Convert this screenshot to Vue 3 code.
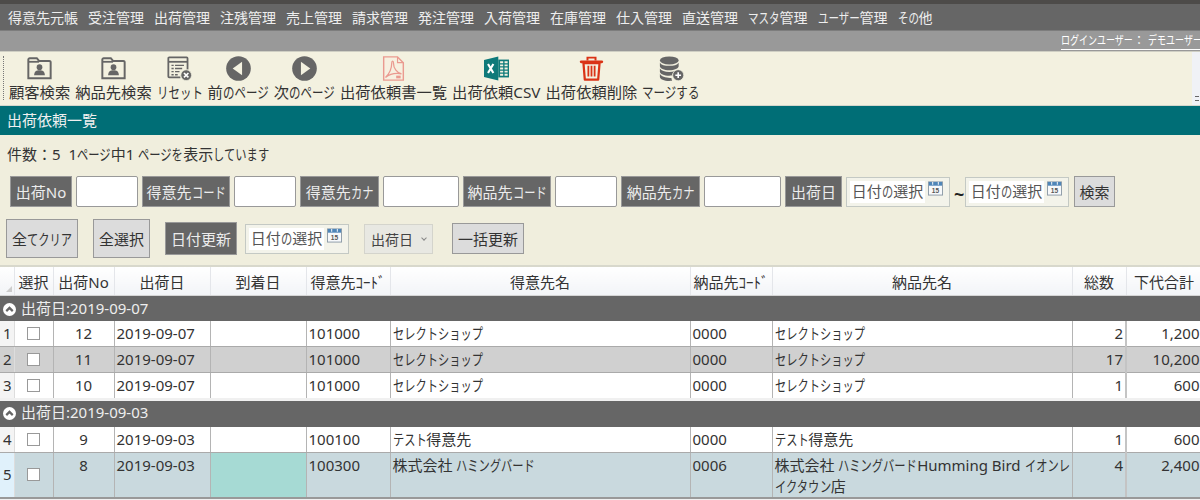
<script setup>
import { h } from 'vue'

// kana in the original font are condensed, so they are squeezed run by run
const KANA_SCALE = 0.75

function Jp(props) {
  const parts = props.text.match(/[ぁ-ゖァ-ヺー]{1,4}|[^ぁ-ゖァ-ヺー]+/g) || []
  return parts.map((part) =>
    /^[ぁ-ゖァ-ヺー]/.test(part)
      ? h('span', { class: 'kana', style: { width: part.length * KANA_SCALE + 'em' } }, part)
      : part
  )
}
Jp.props = ['text']

const menus = ['得意先元帳', '受注管理', '出荷管理', '注残管理', '売上管理', '請求管理', '発注管理', '入荷管理', '在庫管理', '仕入管理', '直送管理', 'マスタ管理', 'ユーザー管理', 'その他']

const tools = [
  { label: '顧客検索', icon: 'folder' },
  { label: '納品先検索', icon: 'folder' },
  { label: 'リセット', icon: 'reset' },
  { label: '前のページ', icon: 'prev' },
  { label: '次のページ', icon: 'next' },
  { label: '出荷依頼書一覧', icon: 'pdf' },
  { label: '出荷依頼CSV', icon: 'excel' },
  { label: '出荷依頼削除', icon: 'trash' },
  { label: 'マージする', icon: 'db' },
]

const filters = [
  { label: '出荷No', labelWidth: 62, inputWidth: 62 },
  { label: '得意先コード', labelWidth: 88, inputWidth: 62 },
  { label: '得意先カナ', labelWidth: 79, inputWidth: 76 },
  { label: '納品先コード', labelWidth: 88, inputWidth: 62 },
  { label: '納品先カナ', labelWidth: 79, inputWidth: 77 },
]

const headers = [
  { label: '選択', width: 39 },
  { label: '出荷No', width: 61 },
  { label: '出荷日', width: 96 },
  { label: '到着日', width: 96 },
  { label: '得意先ｺｰﾄﾞ', width: 84 },
  { label: '得意先名', width: 300 },
  { label: '納品先ｺｰﾄﾞ', width: 82 },
  { label: '納品先名', width: 300 },
  { label: '総数', width: 54 },
  { label: '下代合計', width: 76 },
]

const groups = [
  {
    title: '出荷日:2019-09-07',
    rows: [
      { n: 1, no: 12, date: '2019-09-07', code: '101000', name: 'セレクトショップ', dcode: '0000', dname: 'セレクトショップ', qty: 2, total: '1,200' },
      { n: 2, no: 11, date: '2019-09-07', code: '101000', name: 'セレクトショップ', dcode: '0000', dname: 'セレクトショップ', qty: 17, total: '10,200', kind: 'gray' },
      { n: 3, no: 10, date: '2019-09-07', code: '101000', name: 'セレクトショップ', dcode: '0000', dname: 'セレクトショップ', qty: 1, total: '600' },
    ],
  },
  {
    title: '出荷日:2019-09-03',
    rows: [
      { n: 4, no: 9, date: '2019-09-03', code: '100100', name: 'テスト得意先', dcode: '0000', dname: 'テスト得意先', qty: 1, total: '600' },
      { n: 5, no: 8, date: '2019-09-03', code: '100300', name: '株式会社 ハミングバード', dcode: '0006', dname: '株式会社 ハミングバードHumming Bird イオンレイクタウン店', qty: 4, total: '2,400', kind: 'blue' },
    ],
  },
]
</script>

<template>
  <div class="page">
    <nav class="menu">
      <span v-for="m in menus" :key="m" class="menu__item"><Jp :text="m" /></span>
    </nav>
    <div class="userbar">
      <a class="userbar__link"><Jp text="ログインユーザー： デモユーザー" /></a>
    </div>

    <div class="toolbar">
      <div class="toolbar__grip"></div>
      <div v-for="t in tools" :key="t.label" class="tool">
        <svg class="tool__icon" viewBox="0 0 28 28">
          <g v-if="t.icon === 'folder'">
            <path d="M1.500 25V4a1.500 1.500 0 0 1 1.500-1.500h8l2.500 3H25a1.500 1.500 0 0 1 1.500 1.500v18z" fill="none" stroke="#666" stroke-width="2.200" />
            <path d="M1.500 6.500h12" stroke="#666" stroke-width="2" />
            <circle cx="14" cy="12.500" r="3.200" fill="#666" />
            <path d="M8 21.500c0-4 2.500-5.500 6-5.500s6 1.500 6 5.500z" fill="#666" />
          </g>
          <g v-else-if="t.icon === 'reset'">
            <path d="M15 24H2.500a1 1 0 0 1-1-1V2.500a1 1 0 0 1 1-1H22a1 1 0 0 1 1 1V15" fill="none" stroke="#666" stroke-width="2" />
            <path d="M1.500 6.500H23" stroke="#666" stroke-width="2" />
            <path d="M5 10.500h2.500M9 10.500h10M5 14h2.500M9 14h8M5 17.500h2.500M9 17.500h5M5 21h2.500M9 21h3" stroke="#666" stroke-width="1.500" />
            <circle cx="21.500" cy="21.500" r="6" fill="#666" stroke="#f3f1e0" stroke-width="0.800" />
            <path d="M19 19l5 5M24 19l-5 5" stroke="#fff" stroke-width="1.800" />
          </g>
          <g v-else-if="t.icon === 'prev'">
            <circle cx="14" cy="14" r="13.800" fill="#666" />
            <path d="M18 6.500v15L7.500 14z" fill="#f3f1e0" />
          </g>
          <g v-else-if="t.icon === 'next'">
            <circle cx="14" cy="14" r="13.800" fill="#666" />
            <path d="M10 6.500v15L20.500 14z" fill="#f3f1e0" />
          </g>
          <g v-else-if="t.icon === 'pdf'">
            <path d="M3 1h15.500L25 7.500V27H3z" fill="#f7f0e0" stroke="#ea9a90" stroke-width="1.600" />
            <path d="M18.500 1v6.500H25" fill="none" stroke="#ea9a90" stroke-width="1.300" />
            <path d="M5 24c4-4 7-9 7-16 0-3 2-3 2 0 0 6 4 11 9 12-6-1-13 0-18 4z" fill="none" stroke="#ea9a90" stroke-width="1.400" />
            <rect x="17" y="22" width="5" height="3" fill="#ea9a90" />
          </g>
          <g v-else-if="t.icon === 'excel'">
            <path d="M0 4.500L16 .5v27L0 23.500z" fill="#0f7a7a" />
            <path d="M4.500 9l6 10M10.500 9l-6 10" stroke="#fff" stroke-width="2.400" />
            <path d="M16 4h12v20H16z" fill="#0f7a7a" />
            <path d="M18 7h3.500M23 7h3.500M18 10.500h3.500M23 10.500h3.500M18 14h3.500M23 14h3.500M18 17.500h3.500M23 17.500h3.500M18 21h3.500M23 21h3.500" stroke="#f3f1e0" stroke-width="2" />
          </g>
          <g v-else-if="t.icon === 'trash'">
            <path d="M5 8h18l-1.500 18.500h-15z" fill="none" stroke="#da3316" stroke-width="2.500" stroke-linejoin="round" />
            <path d="M2.500 6.500h23" stroke="#da3316" stroke-width="3.200" stroke-linecap="round" />
            <path d="M9.500 5V1.800h9V5" fill="none" stroke="#da3316" stroke-width="2.200" />
            <path d="M10.500 11v12M14 11v12M17.500 11v12" stroke="#da3316" stroke-width="2" />
          </g>
          <g v-else>
            <ellipse cx="11.500" cy="5" rx="10.500" ry="4.500" fill="#666" />
            <path d="M1 7.500v4c0 2.500 4.700 4.500 10.500 4.500S22 14 22 11.500v-4C20.500 10 16.500 11 11.500 11S2.500 10 1 7.500z" fill="#666" />
            <path d="M1 14v3.500C1 20 5.700 22 11.500 22c1 0 2-.1 2.800-.2.600-2 1.700-3.600 3.500-4.800-2 .5-4 .8-6.300.8C6.500 17.800 2.500 16.500 1 14z" fill="#666" />
            <path d="M1 20v3.500C1 26 5.700 28 11.500 28c1.200 0 2.300-.1 3.300-.2-.5-1-.8-2.200-.9-3.300-5.400.3-11.400-1-12.900-4.500z" fill="#666" />
            <circle cx="21.500" cy="21.500" r="6.200" fill="#666" stroke="#f3f1e0" stroke-width="0.800" />
            <path d="M18.300 21.500h6.400M21.500 18.300v6.400" stroke="#fff" stroke-width="1.800" />
          </g>
        </svg>
        <span class="tool__label"><Jp :text="t.label" /></span>
      </div>
      <div class="toolbar__end"><span class="toolbar__more"></span></div>
    </div>

    <h1 class="title">出荷依頼一覧</h1>

    <section class="panel">
      <p class="panel__count"><Jp text="件数：5  1ページ中1 ページを表示しています" /></p>

      <div class="filters">
        <template v-for="f in filters" :key="f.label">
          <span class="tag" :style="{ width: f.labelWidth + 'px' }"><span><Jp :text="f.label" /></span></span>
          <span class="field" :style="{ width: f.inputWidth + 'px' }"></span>
        </template>
        <span class="tag tag--date">出荷日</span>
        <span class="date">
          <span class="date__text"><Jp text="日付の選択" /></span>
          <svg class="cal" viewBox="0 0 16 16">
            <rect x="0.500" y="1" width="15" height="14" fill="#f7f9fb" stroke="#8c9aa6" />
            <rect x="1" y="1" width="14" height="4" fill="#4f86b8" />
            <path d="M5 1v3M11 1v3" stroke="#fff" />
            <text x="8" y="13" text-anchor="middle" class="cal__num">15</text>
          </svg>
        </span>
        <span class="tilde">~</span>
        <span class="date">
          <span class="date__text"><Jp text="日付の選択" /></span>
          <svg class="cal" viewBox="0 0 16 16">
            <rect x="0.500" y="1" width="15" height="14" fill="#f7f9fb" stroke="#8c9aa6" />
            <rect x="1" y="1" width="14" height="4" fill="#4f86b8" />
            <path d="M5 1v3M11 1v3" stroke="#fff" />
            <text x="8" y="13" text-anchor="middle" class="cal__num">15</text>
          </svg>
        </span>
        <button class="btn btn--search">検索</button>
      </div>

      <div class="actions">
        <button class="btn btn--tall btn--clear"><Jp text="全てクリア" /></button>
        <button class="btn btn--tall btn--all">全選択</button>
        <span class="tag tag--update">日付更新</span>
        <span class="date date--update">
          <span class="date__text"><Jp text="日付の選択" /></span>
          <svg class="cal" viewBox="0 0 16 16">
            <rect x="0.500" y="1" width="15" height="14" fill="#f7f9fb" stroke="#8c9aa6" />
            <rect x="1" y="1" width="14" height="4" fill="#4f86b8" />
            <path d="M5 1v3M11 1v3" stroke="#fff" />
            <text x="8" y="13" text-anchor="middle" class="cal__num">15</text>
          </svg>
        </span>
        <span class="select">出荷日<i class="select__arrow"></i></span>
        <button class="btn btn--bulk">一括更新</button>
      </div>
    </section>

    <div class="grid-wrap">
      <table class="grid">
        <colgroup>
          <col class="grid__rowcol" />
          <col v-for="h in headers" :key="h.label" :style="{ width: h.width + 'px' }" />
        </colgroup>
        <thead>
          <tr>
            <th class="grid__corner"><i></i></th>
            <th v-for="h in headers" :key="h.label">{{ h.label }}</th>
          </tr>
        </thead>
        <tbody v-for="(g, i) in groups" :key="g.title" :class="{ 'grid__later': i > 0 }">
          <tr class="grid__group">
            <td colspan="11">
              <span class="toggle">
                <svg viewBox="0 0 12 12"><path d="M3 7.500L6 4.500l3 3" fill="none" stroke="#666" stroke-width="2" /></svg>
              </span>{{ g.title }}
            </td>
          </tr>
          <tr v-for="r in g.rows" :key="r.n" :class="r.kind ? 'row--' + r.kind : ''">
            <td class="cell--n">{{ r.n }}</td>
            <td class="cell--c cell--check"><span class="check"></span></td>
            <td class="cell--c">{{ r.no }}</td>
            <td>{{ r.date }}</td>
            <td class="cell--arrive"></td>
            <td>{{ r.code }}</td>
            <td><Jp :text="r.name" /></td>
            <td>{{ r.dcode }}</td>
            <td><Jp :text="r.dname" /></td>
            <td class="cell--r cell--qty">{{ r.qty }}</td>
            <td class="cell--r">{{ r.total }}</td>
          </tr>
        </tbody>
      </table>
    </div>
  </div>
</template>

<style>
body {
  background: #f0f0f0;
  overflow: hidden;
}

.kana {
  display: inline-block;
  white-space: nowrap;
  transform: scaleX(0.75);
  transform-origin: left;
}
</style>

<style scoped>
.page {
  width: 1200px;
  height: 500px;
  overflow: hidden;
  font-family: "Noto Sans", "Noto Sans CJK JP", sans-serif;
  color: #333;
  background: #efefef;
}

.menu {
  height: 26px;
  display: flex;
  align-items: center;
  gap: 10px;
  padding: 0 0 0 8px;
  background: #666;
  border-top: 4px solid #4d4b49;
  border-bottom: 1px solid #7d7d7d;
}

.menu__item {
  font-size: 14px;
  color: #eee;
  white-space: nowrap;
}

.userbar {
  height: 20px;
  display: flex;
  justify-content: flex-end;
  align-items: center;
  background: #999;
  border-bottom: 1px solid #cfcfc4;
}

.userbar__link {
  width: 139px;
  overflow: hidden;
  white-space: nowrap;
  font-size: 12px;
  color: #fff;
  border-bottom: 1px solid #fff;
  line-height: 16px;
}

.toolbar {
  height: 53px;
  display: flex;
  gap: 5px;
  padding-left: 3px;
  background: #f3f1e0;
  border-bottom: 1px solid #d4d6cc;
}

.toolbar__grip {
  width: 0;
  height: 44px;
  margin: 4px 0 0 0;
  border-left: 1px dotted #777;
}

.tool {
  display: flex;
  flex-direction: column;
  align-items: center;
  padding-top: 4px;
}

.tool__icon {
  width: 25px;
  height: 25px;
}

.tool__label {
  font-size: 15.300px;
  line-height: 22px;
  white-space: nowrap;
  color: #333;
}

.toolbar__end {
  margin-left: auto;
  width: 8px;
  position: relative;
  background: #f0f2f6;
}

.toolbar__more {
  position: absolute;
  right: 1px;
  bottom: 4px;
  width: 4px;
  height: 3px;
  border-top: 1px solid #666;
  border-bottom: 1px solid #666;
}

.title {
  margin: 0;
  height: 29px;
  line-height: 28px;
  padding-left: 7px;
  font-size: 15px;
  font-weight: 400;
  color: #f0f0f0;
  background: #006e76;
}

.panel {
  height: 130px;
  background: #f0eedd;
  border-bottom: 2px solid #d8d8cc;
  box-sizing: content-box;
}

.panel__count {
  margin: 0;
  padding: 9px 0 0 7px;
  height: 32px;
  line-height: 20px;
  font-size: 15px;
  white-space: pre;
  color: #333;
  box-sizing: border-box;
}

.filters {
  display: flex;
  align-items: center;
  margin-top: 9px;
  padding-left: 10px;
  gap: 4px;
}

.tag {
  height: 31px;
  display: flex;
  align-items: center;
  justify-content: center;
  flex: none;
  font-size: 15px;
  color: #ececec;
  background: #666;
  border: 1px solid #999;
  box-sizing: border-box;
}

.tag--date {
  width: 57px;
}

.tag--update {
  width: 72px;
  height: 33px;
  margin-left: 15px;
}

.field {
  height: 31px;
  flex: none;
  background: #fff;
  border: 1px solid #999;
  border-radius: 2px;
  box-sizing: border-box;
}

.date {
  width: 104px;
  height: 30px;
  flex: none;
  display: flex;
  align-items: flex-start;
  padding: 3px 0 0 3px;
  background: #f3f3ea;
  border: 1px solid #c4c9c4;
  box-sizing: border-box;
}

.date__text {
  height: 22px;
  width: 75px;
  line-height: 21px;
  text-align: center;
  font-size: 15px;
  color: #555;
  background: #fff;
  white-space: nowrap;
}

.cal {
  width: 15px;
  height: 15px;
  margin-left: 3px;
}

.cal__num {
  font-size: 7px;
  font-weight: 700;
  fill: #555;
  font-family: "Liberation Sans", sans-serif;
}

.tilde {
  width: 7px;
  margin-top: 5px;
  font-size: 18px;
  font-weight: 700;
  text-align: center;
  color: #222;
}

.btn {
  height: 31px;
  padding: 0;
  flex: none;
  font-family: inherit;
  font-size: 15px;
  color: #333;
  background: #dcdcdc;
  border: 1px solid #999;
  box-sizing: border-box;
}

.btn--search {
  width: 41px;
  margin-left: 1px;
}

.actions {
  display: flex;
  align-items: center;
  margin-top: 12px;
  padding-left: 6px;
}

.btn--tall {
  height: 39px;
}

.btn--clear {
  width: 72px;
}

.btn--all {
  width: 57px;
  margin-left: 15px;
}

.date--update {
  margin-left: 8px;
}

.select {
  width: 69px;
  height: 30px;
  margin-left: 15px;
  display: flex;
  align-items: center;
  padding-left: 6px;
  font-size: 14px;
  color: #444;
  background: #e8e8e2;
  border: 1px solid #d4d4cc;
  box-sizing: border-box;
  position: relative;
}

.select__arrow {
  position: absolute;
  right: 6px;
  top: 11px;
  width: 3px;
  height: 3px;
  border-right: 1px solid #888;
  border-bottom: 1px solid #888;
  transform: rotate(45deg);
}

.btn--bulk {
  width: 72px;
  margin-left: 19px;
}

.grid-wrap {
  width: 1200px;
  overflow: hidden;
}

.grid {
  width: 1202px;
  table-layout: fixed;
  border-collapse: collapse;
  font-size: 15px;
  color: #333;
}

.grid__rowcol {
  width: 14px;
}

.grid th {
  height: 28px;
  padding: 0;
  font-weight: 400;
  font-size: 15px;
  white-space: nowrap;
  overflow: hidden;
  background: linear-gradient(#fff, #f2f4f7);
  border-right: 1px solid #e4e6ea;
  border-bottom: 1px solid #d5d5d5;
}

.grid__corner {
  position: relative;
}

.grid__corner i {
  position: absolute;
  right: 2px;
  bottom: 3px;
  border-left: 6px solid transparent;
  border-bottom: 6px solid #ccc;
}

.grid td {
  height: 25px;
  padding: 0 2px;
  line-height: 24px;
  vertical-align: top;
  background: #fff;
  border-right: 1px solid #b4b4b4;
  border-bottom: 1px solid #aaa;
  box-sizing: border-box;
  overflow: hidden;
}

.grid .grid__group td {
  height: 25px;
  padding: 0 0 0 3px;
  line-height: 25px;
  font-size: 15px;
  color: #eee;
  background: #666;
  border: 0;
}

.grid__later .grid__group td {
  height: 27px;
  line-height: 22px;
  border-top: 3px solid #f0f0f0;
}

.toggle {
  display: inline-flex;
  width: 13px;
  height: 13px;
  margin-right: 5px;
  vertical-align: -2px;
  border-radius: 50%;
  background: #fff;
}

.grid .cell--n {
  padding: 0 0 0 3px;
  line-height: 25px;
  background: #f4f4f4;
  border-right: 1px solid #ddd;
}

.grid .cell--c {
  text-align: center;
}

.grid .cell--check {
  padding-top: 6px;
  line-height: 0;
}

.check {
  display: inline-block;
  width: 13px;
  height: 13px;
  background: #fff;
  border: 1px solid #999;
  box-sizing: border-box;
}

.grid .cell--r {
  text-align: right;
}

.grid .cell--qty {
  border-right: 2px solid #c4c4c4;
}

.row--gray td {
  background: #d0d0d0 !important;
}

.grid .row--blue td {
  height: 44px;
  padding-top: 2px;
  line-height: 21px;
  background: #c9d9de !important;
  border-bottom: 2px solid #999 !important;
}

.grid .row--blue .cell--n {
  padding-top: 9px;
  line-height: 25px;
  background: #e0f1fb !important;
}

.grid .row--blue .cell--check {
  padding-top: 15px;
  line-height: 0;
}

.grid .row--blue .cell--arrive {
  background: #a6dad4 !important;
}
</style>
